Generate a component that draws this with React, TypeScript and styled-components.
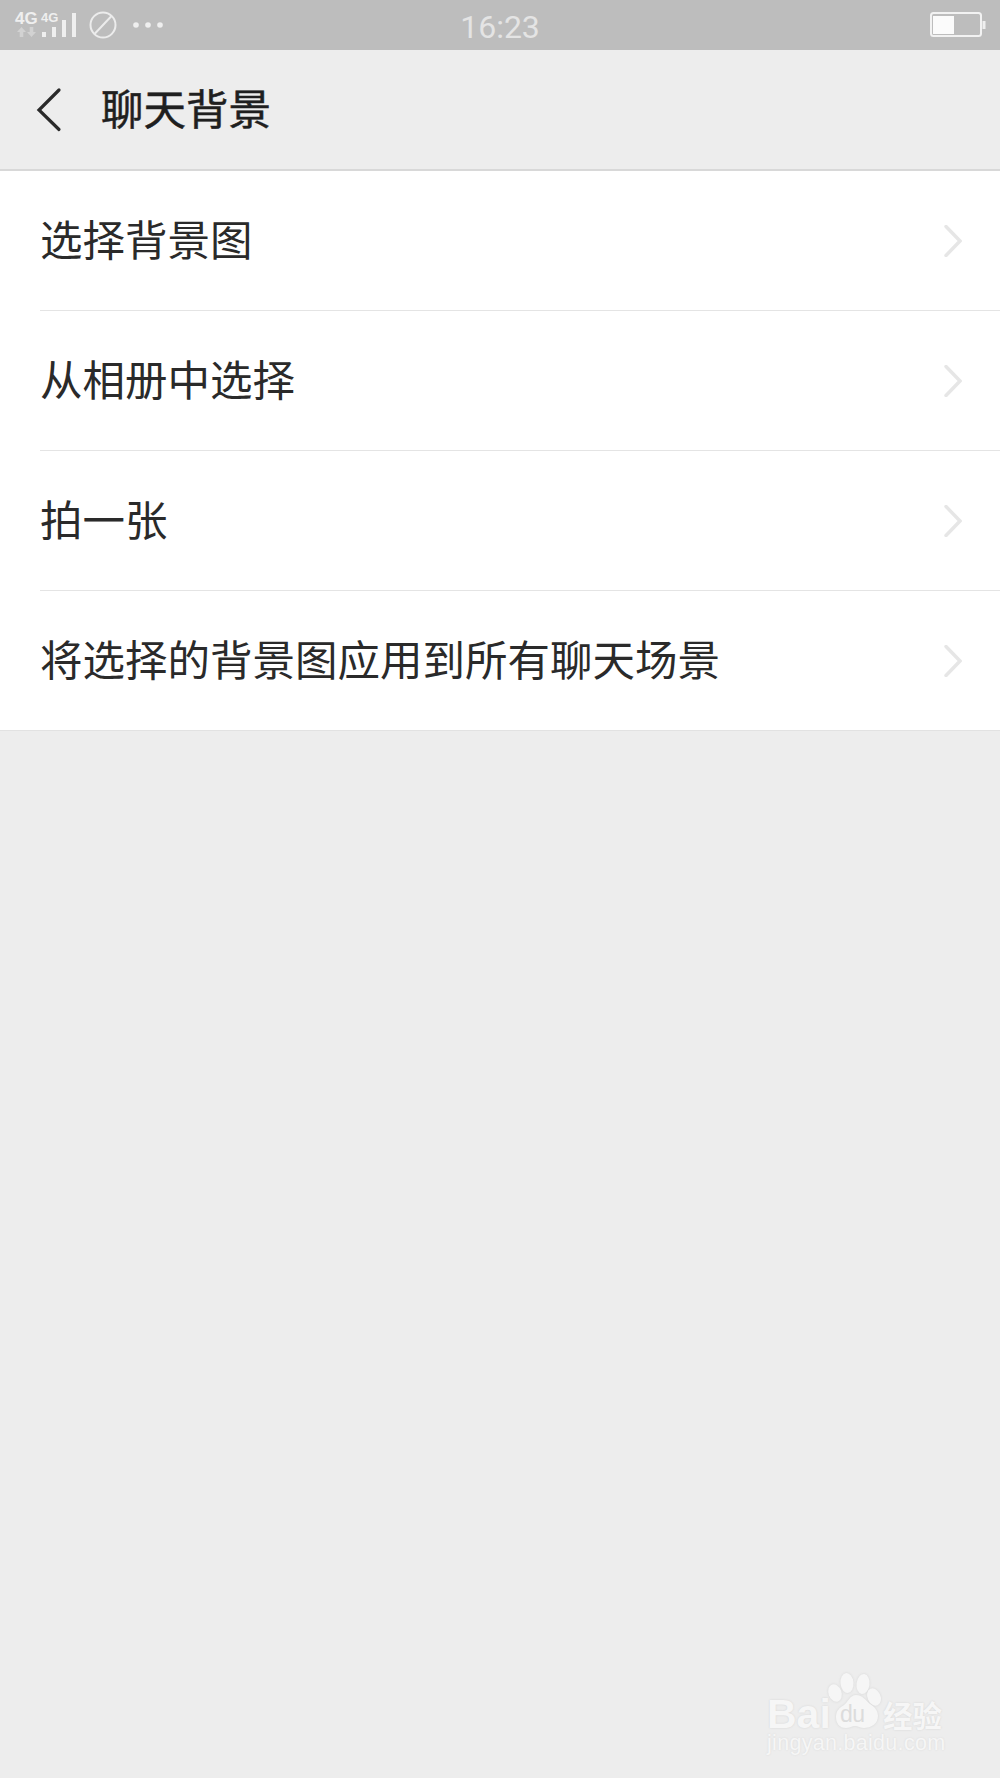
import React from 'react'
import styled, { createGlobalStyle } from 'styled-components'

const Global = createGlobalStyle`
  html, body {
    margin: 0;
    padding: 0;
    background: #ededed;
  }
  * {
    box-sizing: border-box;
  }
`

const Page = styled.div`
  position: relative;
  width: 1000px;
  height: 1778px;
  overflow: hidden;
  background: #ededed;
  font-family: "Noto Sans CJK SC", "Liberation Sans", sans-serif;
`

const StatusBar = styled.div`
  position: relative;
  height: 50px;
  background: #bdbdbd;
  display: flex;
  align-items: center;
  justify-content: space-between;
  padding: 0 14px;
`

const StatusLeft = styled.div`
  display: flex;
  align-items: center;
`

const Clock = styled.div`
  position: absolute;
  left: 0;
  right: 0;
  top: 8px;
  text-align: center;
  font-family: "Roboto", "Liberation Sans", sans-serif;
  font-size: 32px;
  line-height: 38px;
  color: #e4e4e4;
`

const Header = styled.div`
  height: 121px;
  display: flex;
  align-items: center;
  padding-left: 36px;
  border-bottom: 2px solid #d8d8d8;
`

const Title = styled.div`
  margin-left: 39px;
  margin-top: -5px;
  font-size: 42.5px;
  line-height: 60px;
  font-weight: 400;
  -webkit-text-stroke: 0.5px #1f1f1f;
  color: #1f1f1f;
`

const List = styled.div`
  background: #fff;
  border-bottom: 1px solid #e2e2e2;
`

const Row = styled.div<{ $last?: boolean }>`
  height: ${(p) => (p.$last ? '139px' : '140px')};
  margin-left: 40px;
  padding-right: 38px;
  display: flex;
  align-items: center;
  justify-content: space-between;
  border-bottom: ${(p) => (p.$last ? 'none' : '1px solid #e4e4e4')};
`

const RowLabel = styled.div`
  margin-bottom: 6px;
  font-size: 42.5px;
  line-height: 60px;
  color: #2a2a2a;
`

const Watermark = styled.div`
  position: absolute;
  left: 767px;
  top: 1668px;
  width: 190px;
  height: 100px;
`

const Paw = styled.svg`
  position: absolute;
  left: 0;
  top: 0;
  filter: drop-shadow(0 0 1px #d4d4d4);
`

const BaiWord = styled.div`
  position: absolute;
  left: 0;
  top: 30px;
  font-family: "Liberation Sans", sans-serif;
  font-size: 41px;
  line-height: 32px;
  font-weight: 700;
  color: #f6f6f6;
  text-shadow: 0 0 2px #d2d2d2;
`

const DuWord = styled.div`
  position: absolute;
  left: 73px;
  top: 32px;
  font-family: "Liberation Sans", sans-serif;
  font-size: 23px;
  line-height: 28px;
  letter-spacing: -0.5px;
  color: #dcdcdc;
`

const Jingyan = styled.div`
  position: absolute;
  left: 116px;
  top: 31px;
  font-size: 29.5px;
  line-height: 30px;
  font-weight: 700;
  color: #f6f6f6;
  text-shadow: 0 0 2px #d2d2d2;
`

const Site = styled.div`
  position: absolute;
  left: 0;
  top: 62px;
  font-family: "Liberation Sans", sans-serif;
  font-size: 21.5px;
  line-height: 26px;
  letter-spacing: 0.3px;
  color: #f6f6f6;
  text-shadow: 0 0 2px #d8d8d8;
`

const SignalIcon = () => (
  <svg width="66" height="40" viewBox="0 0 66 40">
    <text x="1" y="19" fontFamily="Liberation Sans" fontWeight="700" fontSize="17" fill="#efefef">4G</text>
    <text x="27" y="17" fontFamily="Liberation Sans" fontWeight="700" fontSize="13" fill="#efefef">4G</text>
    <path d="M3 27 7.500 22l4.500 5H9.300v5H5.700v-5z" fill="#d2d2d2" />
    <path d="M13 27l4.500 5 4.500-5h-2.700v-5h-3.600v5z" fill="#d2d2d2" />
    <rect x="28" y="27" width="4" height="5" fill="#efefef" />
    <rect x="38" y="22" width="4" height="10" fill="#efefef" />
    <rect x="48" y="15" width="4" height="17" fill="#efefef" />
    <rect x="58" y="8" width="4" height="24" fill="#efefef" />
  </svg>
)

const MuteIcon = () => (
  <svg width="28" height="28" viewBox="0 0 28 28" style={{ marginLeft: 9 }}>
    <circle cx="14" cy="14" r="12.500" fill="none" stroke="#ececec" strokeWidth="2" />
    <path d="M5.500 23 22.500 5" stroke="#ececec" strokeWidth="2" />
  </svg>
)

const DotsIcon = () => (
  <svg width="32" height="8" viewBox="0 0 32 8" style={{ marginLeft: 16 }}>
    <circle cx="3" cy="4" r="2.800" fill="#efefef" />
    <circle cx="15" cy="4" r="2.800" fill="#efefef" />
    <circle cx="27" cy="4" r="2.800" fill="#efefef" />
  </svg>
)

const BatteryIcon = () => (
  <svg width="56" height="26" viewBox="0 0 56 26">
    <rect x="1" y="1" width="50" height="23" rx="2.500" fill="none" stroke="#f2f2f2" strokeWidth="2" />
    <rect x="3" y="4" width="21" height="18" fill="#fbfbfb" />
    <rect x="52.500" y="9" width="3" height="8" fill="#efefef" />
  </svg>
)

const BackIcon = () => (
  <svg width="26" height="46" viewBox="0 0 26 46">
    <path d="M23 3 3 23l20 19.500" fill="none" stroke="#2a2a2a" strokeWidth="3.200" strokeLinecap="round" strokeLinejoin="miter" />
  </svg>
)

const ChevronIcon = () => (
  <svg width="18" height="32" viewBox="0 0 18 32">
    <path d="M2 1.500 16 16 2 30.500" fill="none" stroke="#e6e6e6" strokeWidth="3.400" strokeLinecap="round" />
  </svg>
)

const rows = ['选择背景图', '从相册中选择', '拍一张', '将选择的背景图应用到所有聊天场景']

const App: React.FC = () => {
  return (
    <Page>
      <Global />
      <StatusBar>
        <StatusLeft>
          <SignalIcon />
          <MuteIcon />
          <DotsIcon />
        </StatusLeft>
        <Clock>16:23</Clock>
        <BatteryIcon />
      </StatusBar>
      <Header>
        <BackIcon />
        <Title>聊天背景</Title>
      </Header>
      <List>
        {rows.map((label, i) => (
          <Row key={label} $last={i === rows.length - 1}>
            <RowLabel>{label}</RowLabel>
            <ChevronIcon />
          </Row>
        ))}
      </List>
      <Watermark>
        <BaiWord>Bai</BaiWord>
        <Paw width="190" height="72" viewBox="0 0 190 72">
          <ellipse cx="68" cy="25" rx="6.500" ry="9" fill="#f6f6f6" transform="rotate(-20 68 25)" />
          <ellipse cx="80" cy="15" rx="6.500" ry="10" fill="#f6f6f6" transform="rotate(-5 80 15)" />
          <ellipse cx="96" cy="16" rx="6.500" ry="10" fill="#f6f6f6" transform="rotate(8 96 16)" />
          <ellipse cx="107" cy="29" rx="6.500" ry="9" fill="#f6f6f6" transform="rotate(-25 107 29)" />
          <path d="M89 27c7 0 10 6 14 9 5 3 8 7 8 12 0 8-7 12-14 12-4 0-6-2-9-2s-5 2-9 2c-7 0-10-5-10-11 0-6 3-9 8-12 4-3 6-10 12-10z" fill="#f6f6f6" />
        </Paw>
        <DuWord>du</DuWord>
        <Jingyan>经验</Jingyan>
        <Site>jingyan.baidu.com</Site>
      </Watermark>
    </Page>
  )
}

export default App
